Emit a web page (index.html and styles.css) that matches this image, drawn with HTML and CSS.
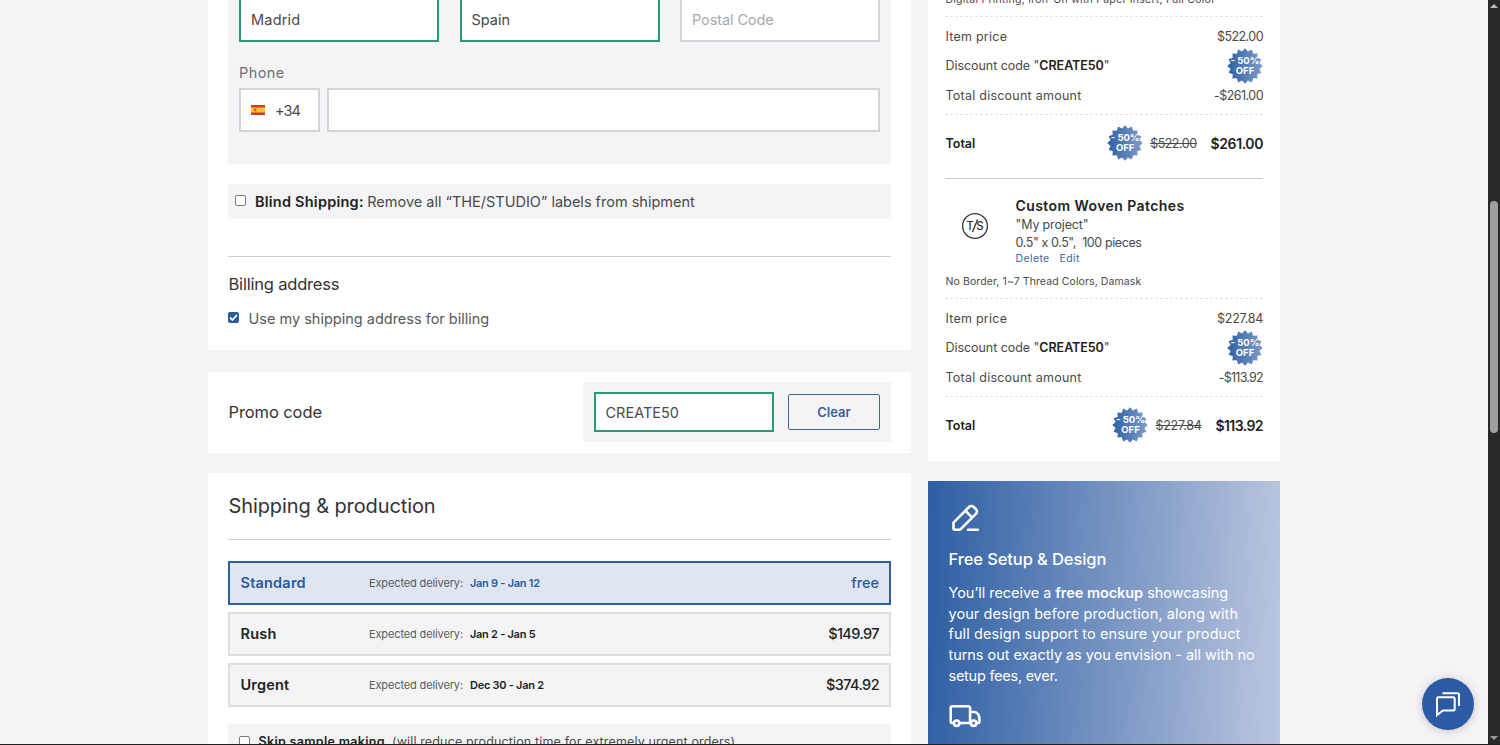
FILE: index.html
```html
<!DOCTYPE html>
<html lang="en">
<head>
<meta charset="utf-8">
<title>Checkout</title>
<link rel="stylesheet" href="styles.css">
</head>
<body>
<svg class="defs" aria-hidden="true">
  <defs>
    <linearGradient id="seal" x1="0" y1="0" x2="1" y2="0">
      <stop offset="0" stop-color="#2f60a5"/>
      <stop offset="1" stop-color="#7f9cc9"/>
    </linearGradient>
    <symbol id="burst" viewBox="-18 -18 36 36">
      <path fill="url(#seal)" d="M0-17.8 2.9-14.4 6.8-16.4 8.2-12.2 12.6-12.6 12.2-8.2 16.4-6.8 14.4-2.9 17.8 0 14.4 2.9 16.4 6.8 12.2 8.2 12.6 12.6 8.2 12.2 6.8 16.4 2.9 14.4 0 17.8-2.9 14.4-6.8 16.4-8.2 12.2-12.6 12.6-12.2 8.2-16.4 6.8-14.4 2.9-17.8 0-14.4-2.9-16.4-6.8-12.2-8.2-12.6-12.6-8.2-12.2-6.8-16.4-2.9-14.4Z"/>
    </symbol>
  </defs>
</svg>
<div class="window">
  <div class="page">
    <main class="main">
      <section class="card address">
        <div class="panel">
          <div class="fields">
            <div class="input valid"><span class="t t15 city">Madrid</span></div>
            <div class="input valid"><span class="t t15">Spain</span></div>
            <div class="input"><span class="t t15 placeholder">Postal Code</span></div>
          </div>
          <div class="label"><span class="t t15">Phone</span></div>
          <div class="phone">
            <div class="input country">
              <svg class="flag" viewBox="0 0 14 10"><path fill="#d0392b" d="M0 0h14v10H0z"/><path fill="#fbc531" d="M0 2.5h14v5H0z"/><path fill="#c9682c" d="M3 3.5h2.4v3H3z"/></svg>
              <span class="t t15 dial">+34</span>
            </div>
            <div class="input number"></div>
          </div>
        </div>
        <div class="blind"><i class="check"></i><b class="t">Blind Shipping:</b><span class="t">Remove all “THE/STUDIO” labels from shipment</span></div>
        <div class="rule"></div>
        <h3 class="h3"><span class="t">Billing address</span></h3>
        <div class="same"><i class="check on"><svg viewBox="0 0 11 11"><path d="M2 5.7 4.4 8 9 3"/></svg></i><span class="t">Use my shipping address for billing</span></div>
      </section>

      <section class="card promo">
        <h3 class="h3"><span class="t">Promo code</span></h3>
        <div class="promo-box">
          <div class="input valid code"><span class="t t15">CREATE50</span></div>
          <div class="clear"><span class="t">Clear</span></div>
        </div>
      </section>

      <section class="card shipping">
        <h2 class="h2"><span class="t">Shipping &amp; production</span></h2>
        <div class="option selected"><span class="name"><span class="t">Standard</span></span><span class="t exp">Expected delivery:</span><b class="t date">Jan 9 - Jan 12</b><span class="t price free">free</span></div>
        <div class="option"><span class="name"><span class="t">Rush</span></span><span class="t exp">Expected delivery:</span><b class="t date">Jan 2 - Jan 5</b><span class="t price">$149.97</span></div>
        <div class="option"><span class="name"><span class="t">Urgent</span></span><span class="t exp">Expected delivery:</span><b class="t date">Dec 30 - Jan 2</b><span class="t price">$374.92</span></div>
        <div class="skip"><i class="check"></i><b class="t">Skip sample making</b><span class="t">(will reduce production time for extremely urgent orders)</span></div>
      </section>
    </main>

    <aside class="side">
      <section class="card summary">
        <div class="spec first"><span class="t">Digital Printing, Iron-On with Paper Insert, Full Color</span></div>
        <div class="lines">
          <div class="line"><span class="t">Item price</span><span class="t num">$522.00</span></div>
          <div class="line"><span class="t coupon">Discount code "<b>CREATE50</b>"</span><div class="seal"><svg><use href="#burst"/></svg><span>- 50%<br>OFF</span></div></div>
          <div class="line"><span class="t">Total discount amount</span><span class="t num">-$261.00</span></div>
        </div>
        <div class="total"><b class="t">Total</b><div class="seal"><svg><use href="#burst"/></svg><span>- 50%<br>OFF</span></div><s class="t">$522.00</s><strong class="t">$261.00</strong></div>
        <div class="item">
          <svg class="logo" viewBox="0 0 28 28"><circle cx="14" cy="14" r="12.4"/><text x="5.2" y="18.2">T</text><path d="M11.5 20 16.6 7.600"/><text x="15.200" y="18.200">S</text></svg>
          <div class="info">
            <h4><span class="t">Custom Woven Patches</span></h4>
            <p><span class="t project">"My project"</span></p>
            <p><span class="t size">0.5" x 0.5",&nbsp; 100 pieces</span></p>
            <p class="links"><span class="t">Delete</span><span class="t">Edit</span></p>
          </div>
        </div>
        <div class="spec second"><span class="t">No Border, 1~7 Thread Colors, Damask</span></div>
        <div class="lines narrow">
          <div class="line"><span class="t">Item price</span><span class="t num wide">$227.84</span></div>
          <div class="line"><span class="t coupon">Discount code "<b>CREATE50</b>"</span><div class="seal"><svg><use href="#burst"/></svg><span>- 50%<br>OFF</span></div></div>
          <div class="line"><span class="t">Total discount amount</span><span class="t num">-$113.92</span></div>
        </div>
        <div class="total narrow"><b class="t">Total</b><div class="seal"><svg><use href="#burst"/></svg><span>- 50%<br>OFF</span></div><s class="t">$227.84</s><strong class="t">$113.92</strong></div>
      </section>

      <section class="perks">
        <svg class="pen" viewBox="0 0 32 32"><path d="M4.5 26.6v-6L20 5a3.4 3.4 0 0 1 4.8 0l2.1 2.1a3.4 3.4 0 0 1 0 4.8L12 26.8c-.6.6-1.4.9-2.2.9H5.600a1.100 1.100 0 0 1-1.100-1.100ZM16.300 8.700l6.900 6.900M19 27.700h9.800"/></svg>
        <h3><span class="t">Free Setup &amp; Design</span></h3>
        <p><span class="t snug">You’ll receive a <b>free mockup</b> showcasing</span><br><span class="t airy">your design before production, along with</span><br><span class="t airy">full design support to ensure your product</span><br><span class="t snug">turns out exactly as you envision - all with no</span><br><span class="t tight">setup fees, ever.</span></p>
        <svg class="truck" viewBox="0 0 32 24"><path d="M5 19H3.500A1.800 1.800 0 0 1 1.700 17.200V4.100A1.800 1.800 0 0 1 3.500 2.300H19.300A1.800 1.800 0 0 1 21.100 4.100V19H10.500M21.100 8H25.500C28.500 8 30.400 11.500 30.400 14.500V17.400A1.600 1.600 0 0 1 28.800 19H27.800"/><circle cx="7.700" cy="19.200" r="2.700"/><circle cx="24.600" cy="19.200" r="2.700"/></svg>
      </section>
    </aside>
  </div>
  <div class="scrollbar"><i class="up"></i><i class="thumb"></i><i class="down"></i></div>
  <div class="chat"><svg viewBox="0 0 28 28"><path d="M3 7.300h16.500a1.200 1.200 0 0 1 1.200 1.200v10.800a1.200 1.200 0 0 1-1.200 1.200H8.800L3 25.200V7.300M8.500 3.300h15.300a1.200 1.200 0 0 1 1.200 1.200V16"/></svg></div>
</div>
</body>
</html>
```
FILE: styles.css
```css
* { box-sizing: border-box; }
body { margin: 0; background: #f4f4f7; font-family: Inter, "Open Sans", sans-serif; color: #222; }
h2, h3, h4, p { margin: 0; font-weight: 400; }
b, strong { font-weight: 600; }
i { font-style: normal; }
.t { white-space: nowrap; }
.defs { position: absolute; width: 0; height: 0; }

.window { position: relative; width: 1500px; height: 745px; overflow: hidden; border-bottom: 1.5px solid #202023; background: #f4f4f7; }
.page { display: flex; align-items: flex-start; gap: 17px; padding-left: 208px; }
.main { width: 703px; }
.side { width: 352px; }
.card { background: #fff; }

.address { height: 350px; padding: 0 20px; }
.panel { height: 164px; background: #f4f4f7; padding: 0 11px; }
.fields { display: flex; justify-content: space-between; height: 42px; align-items: flex-end; }
.input { display: flex; align-items: center; border: 2px solid #d4d4d8; background: #fff; height: 44px; padding: 0 10px; color: #4a4a4a; }
.fields .input { width: 200px; height: 46px; }
.input.valid { border-color: #2b9a70; }
.t15 { font-size: 14.5px; }
.city { letter-spacing: .2px; }
.placeholder { color: #a9a9ad; letter-spacing: -.1px; }
.label { padding-top: 20px; height: 46px; line-height: 20px; color: #707070; letter-spacing: .4px; }
.phone { display: flex; gap: 7px; }
.country { width: 81px; gap: 10px; }
.dial { letter-spacing: -1px; }
.number { flex: 1; }
.flag { width: 14px; height: 10px; }

.blind { display: flex; align-items: center; height: 35px; margin-top: 20px; padding-left: 7px; background: #f4f4f7; font-size: 14.5px; color: #4a4a4a; }
.blind b { margin: 0 3.5px 0 9px; color: #222; letter-spacing: .23px; }
.check { flex: none; display: block; width: 11px; height: 11px; border: 1px solid #7a7a7d; border-radius: 2px; background: #fff; }
.blind .check { margin-top: -2px; }
.check.on { border: 0; background: #2c5b9c; margin-top: -2px; }
.check svg { display: block; width: 11px; height: 11px; fill: none; stroke: #fff; stroke-width: 1.8; }
.rule { height: 38px; border-bottom: 1px solid #cfcfd1; }
.h3 { padding-left: .5px; font-size: 16.5px; line-height: 24px; color: #333; letter-spacing: -.2px; }
.address .h3 { margin-top: 15px; }
.same { display: flex; align-items: center; gap: 9.5px; height: 20px; margin-top: 12.5px; font-size: 14.5px; color: #5a5a5a; }

.promo { display: flex; align-items: center; justify-content: space-between; height: 81px; margin-top: 21.5px; padding: 0 20px; }
.promo .h3 { letter-spacing: -.1px; padding-bottom: 1px; }
.promo-box { display: flex; align-items: center; gap: 14px; width: 308px; height: 60px; padding: 0 11px; background: #f4f4f7; }
.code { width: 180px; height: 40px; padding-left: 9.5px; }
.clear { flex: 1; display: flex; align-items: center; justify-content: center; height: 36px; border: 1px solid #43659d; border-radius: 2px; font-size: 13px; font-weight: 600; color: #3a5e97; }

.shipping { height: 300px; margin-top: 20.5px; padding: 0 20px; }
.h2 { height: 67px; padding: 18px 0 0 .5px; line-height: 30px; margin-bottom: 20.5px; border-bottom: 1px solid #cfcfd1; font-size: 20px; letter-spacing: -.1px; color: #333; }
.option { display: flex; align-items: center; height: 44.5px; margin-bottom: 6.5px; padding: 0 10px; border: 2px solid #dedede; background: #f4f4f7; }
.option.selected { border-color: #315f99; background: #dfe5f1; }
.name { width: 129px; padding-left: .5px; font-size: 14.5px; font-weight: 600; letter-spacing: .2px; }
.exp { font-size: 11px; color: #5a5a5a; letter-spacing: -.13px; }
.date { margin-left: 7px; font-size: 11px; letter-spacing: -.27px; }
.price { margin-left: auto; font-size: 14.5px; font-weight: 500; letter-spacing: -.6px; }
.price.free { letter-spacing: 0; }
.selected .name, .selected .date, .selected .price { color: #2c5a9e; }
.skip { display: flex; align-items: center; height: 35px; margin-top: 17px; padding-left: 11px; background: #f4f4f7; font-size: 12.5px; color: #4a4a4a; letter-spacing: .15px; }
.skip b { margin: 0 7px 0 8.5px; color: #222; letter-spacing: .32px; }

.summary { height: 461px; padding: 0 17px; color: #4a4a4a; }
.spec { padding-left: .5px; font-size: 10.5px; line-height: 14px; height: 24px; border-bottom: 1px dashed #e4e4e6; letter-spacing: .1px; }
.spec.first { height: 17px; line-height: 0; letter-spacing: .25px; }
.lines { height: 97.5px; padding: 5px 0 4px .5px; border-bottom: 1px dashed #e4e4e6; font-size: 12.5px; letter-spacing: .24px; }
.line { display: flex; align-items: center; justify-content: space-between; height: 29.3px; }
.lines b { color: #222; }
.coupon { letter-spacing: -.05px; }
.num { letter-spacing: -.55px; }
.narrow .num { letter-spacing: -.75px; }
.narrow .num.wide { letter-spacing: -.28px; }
.seal { position: relative; flex: none; width: 36px; height: 36px; letter-spacing: 0; }
.seal svg { display: block; width: 36px; height: 36px; }
.seal span { position: absolute; inset: 8px 0 0; color: #fff; font-size: 9.5px; line-height: 10px; font-weight: 700; text-align: center; white-space: nowrap; }
.total { display: flex; align-items: center; height: 57px; padding-left: .5px; font-size: 12.5px; }
.total b { margin-right: auto; color: #222; }
.total s { margin: 0 14px 0 7px; letter-spacing: -.5px; }
.total strong { font-size: 14px; color: #222; letter-spacing: -.4px; }
.total.narrow s { letter-spacing: -.28px; }
.total.narrow strong { letter-spacing: -.57px; }
.item { display: flex; margin-top: 6.5px; height: 97px; padding-top: 17px; border-top: 1px solid #c8c8ca; }
.logo { width: 28px; height: 28px; margin: 16px 26.5px 0 16px; }
.logo circle, .logo path { fill: none; stroke: #333; stroke-width: 1.3; }
.logo text { font-size: 11.5px; font-weight: 500; fill: #333; }
.info { font-size: 12.5px; line-height: 17.5px; }
.info h4 { font-size: 14px; line-height: 20px; font-weight: 600; color: #222; letter-spacing: .42px; }
.project { letter-spacing: -.15px; }
.size { letter-spacing: -.4px; }
.links { display: flex; gap: 10px; margin-top: -1px; font-size: 10.5px; color: #44699f; letter-spacing: .38px; }

.perks { height: 300px; margin-top: 20px; padding: 21px 20.5px; background: linear-gradient(92deg, #2d5ea3, #bcc7e0); color: #fff; }
.pen, .truck { display: block; fill: none; stroke: #fff; stroke-width: 2.6; stroke-linejoin: round; stroke-linecap: round; }
.pen { width: 32px; height: 32px; }
.perks h3 { margin-top: 12.5px; font-size: 16.5px; line-height: 24px; font-weight: 500; letter-spacing: -.1px; }
.perks p { margin-top: 12.5px; font-size: 14.5px; line-height: 20.7px; }
.snug { letter-spacing: -.05px; }
.airy { letter-spacing: .08px; }
.tight { letter-spacing: -.25px; }
.truck { width: 32px; height: 24px; margin-top: 17px; }

.scrollbar { position: absolute; right: 0; top: 0; width: 12px; height: 745px; background: #29292a; }
.scrollbar i { position: absolute; left: 2px; }
.thumb { top: 201px; width: 8px; height: 232px; border-radius: 4px; background: #9f9f9f; }
.up, .down { border: 4px solid transparent; }
.up { top: 0; border-bottom-color: #bbb; }
.down { bottom: 1px; border-top-color: #999; }
.chat { position: absolute; left: 1422px; top: 678px; width: 52px; height: 52px; padding: 12px; border-radius: 50%; background: #2c5ba3; box-shadow: 0 1px 10px #0003; }
.chat svg { width: 28px; height: 28px; fill: none; stroke: #fff; stroke-width: 2; }
```
